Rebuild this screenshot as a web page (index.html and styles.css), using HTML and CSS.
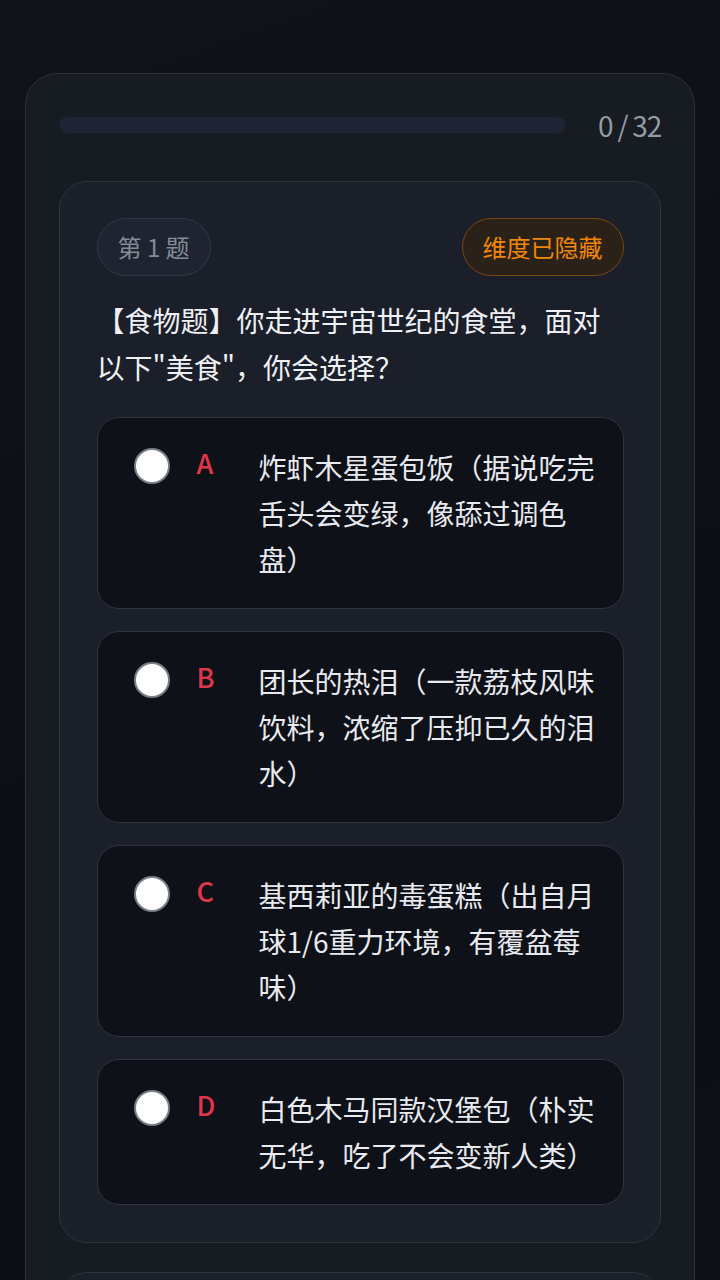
FILE: index.html
```html
<!DOCTYPE html>
<html lang="zh-CN">
<head>
    <meta charset="UTF-8">
    <meta name="viewport" content="width=device-width, initial-scale=1.0">
    <title>测试</title>
    <link rel="stylesheet" href="styles.css">
</head>
<body>
    <div class="panel">
        <div class="progress-row">
            <div class="progress-track"><div class="progress-fill" style="width: 0%"></div></div>
            <span class="progress-text">0 / 32</span>
        </div>

        <div class="question-card">
            <div class="question-head">
                <span class="badge">第 1 题</span>
                <span class="badge badge-warn">维度已隐藏</span>
            </div>
            <p class="question-text">【食物题】你走进宇宙世纪的食堂，面对以下"美食"，你会选择？</p>

            <div class="options">
                <label class="option">
                    <span class="radio"></span>
                    <span class="letter">A</span>
                    <span class="option-text">炸虾木星蛋包饭（据说吃完舌头会变绿，像舔过调色盘）</span>
                </label>
                <label class="option">
                    <span class="radio"></span>
                    <span class="letter">B</span>
                    <span class="option-text">团长的热泪（一款荔枝风味饮料，浓缩了压抑已久的泪水）</span>
                </label>
                <label class="option">
                    <span class="radio"></span>
                    <span class="letter">C</span>
                    <span class="option-text">基西莉亚的毒蛋糕（出自月球1/6重力环境，有覆盆莓味）</span>
                </label>
                <label class="option">
                    <span class="radio"></span>
                    <span class="letter">D</span>
                    <span class="option-text">白色木马同款汉堡包（朴实无华，吃了不会变新人类）</span>
                </label>
            </div>
        </div>

        <div class="question-card next-card"></div>
    </div>
</body>
</html>
```

FILE: styles.css
```css
* {
    box-sizing: border-box;
}
body {
    margin: 0;
    min-height: 1280px;
    background: linear-gradient(160deg, #101318 0%, #0b0d12 60%, #0e1117 100%);
    font-family: "Noto Sans CJK SC", "Noto Sans", sans-serif;
    color: #e8eaf0;
    overflow: hidden;
}
.panel {
    width: 670px;
    margin: 73px auto 0;
    padding: 32px 33px 40px;
    background: #171b22;
    border: 1px solid #2c313a;
    border-radius: 32px;
}
.progress-row {
    display: flex;
    align-items: center;
    gap: 32px;
    height: 38px;
    margin-bottom: 37px;
}
.progress-track {
    flex: 1;
    height: 16px;
    background: #1f2333;
    border-radius: 8px;
    overflow: hidden;
}
.progress-fill {
    height: 100%;
    background: #e0364a;
}
.progress-text {
    font-size: 28px;
    color: #959ba4;
    letter-spacing: -1.2px;
}
.question-card {
    background: #1a1f29;
    border: 1.5px solid #2e3440;
    border-radius: 28px;
    padding: 36px 36.5px 37px;
}
.question-head {
    display: flex;
    justify-content: space-between;
    align-items: center;
}
.badge {
    display: inline-block;
    height: 58px;
    line-height: 36px;
    padding: 10px 20px;
    font-size: 24px;
    color: #858c97;
    background: #1e2432;
    border: 1px solid #323946;
    border-radius: 29px;
}
.badge-warn {
    color: #f0860a;
    background: #2a2219;
    border-color: #7a4615;
}
.question-text {
    margin: 21px 0 26px;
    font-size: 28px;
    line-height: 47px;
    color: #eef0f4;
}
.options {
    display: flex;
    flex-direction: column;
    gap: 22px;
}
.option {
    display: flex;
    align-items: flex-start;
    padding: 26px 28px 26px 36px;
    background: #0e1117;
    border: 1px solid #2f3540;
    border-radius: 22px;
}
.radio {
    flex: none;
    width: 36px;
    height: 36px;
    margin-top: 4px;
    margin-right: 27px;
    background: #fff;
    border: 2px solid #7a7f88;
    border-radius: 50%;
}
.letter {
    flex: none;
    width: 62px;
    font-weight: 500;
    font-size: 27px;
    line-height: 38px;
    color: #e0364a;
}
.option-text {
    font-size: 28px;
    line-height: 46px;
    color: #e8eaf0;
}
.next-card {
    margin-top: 29px;
    height: 200px;
}
```
